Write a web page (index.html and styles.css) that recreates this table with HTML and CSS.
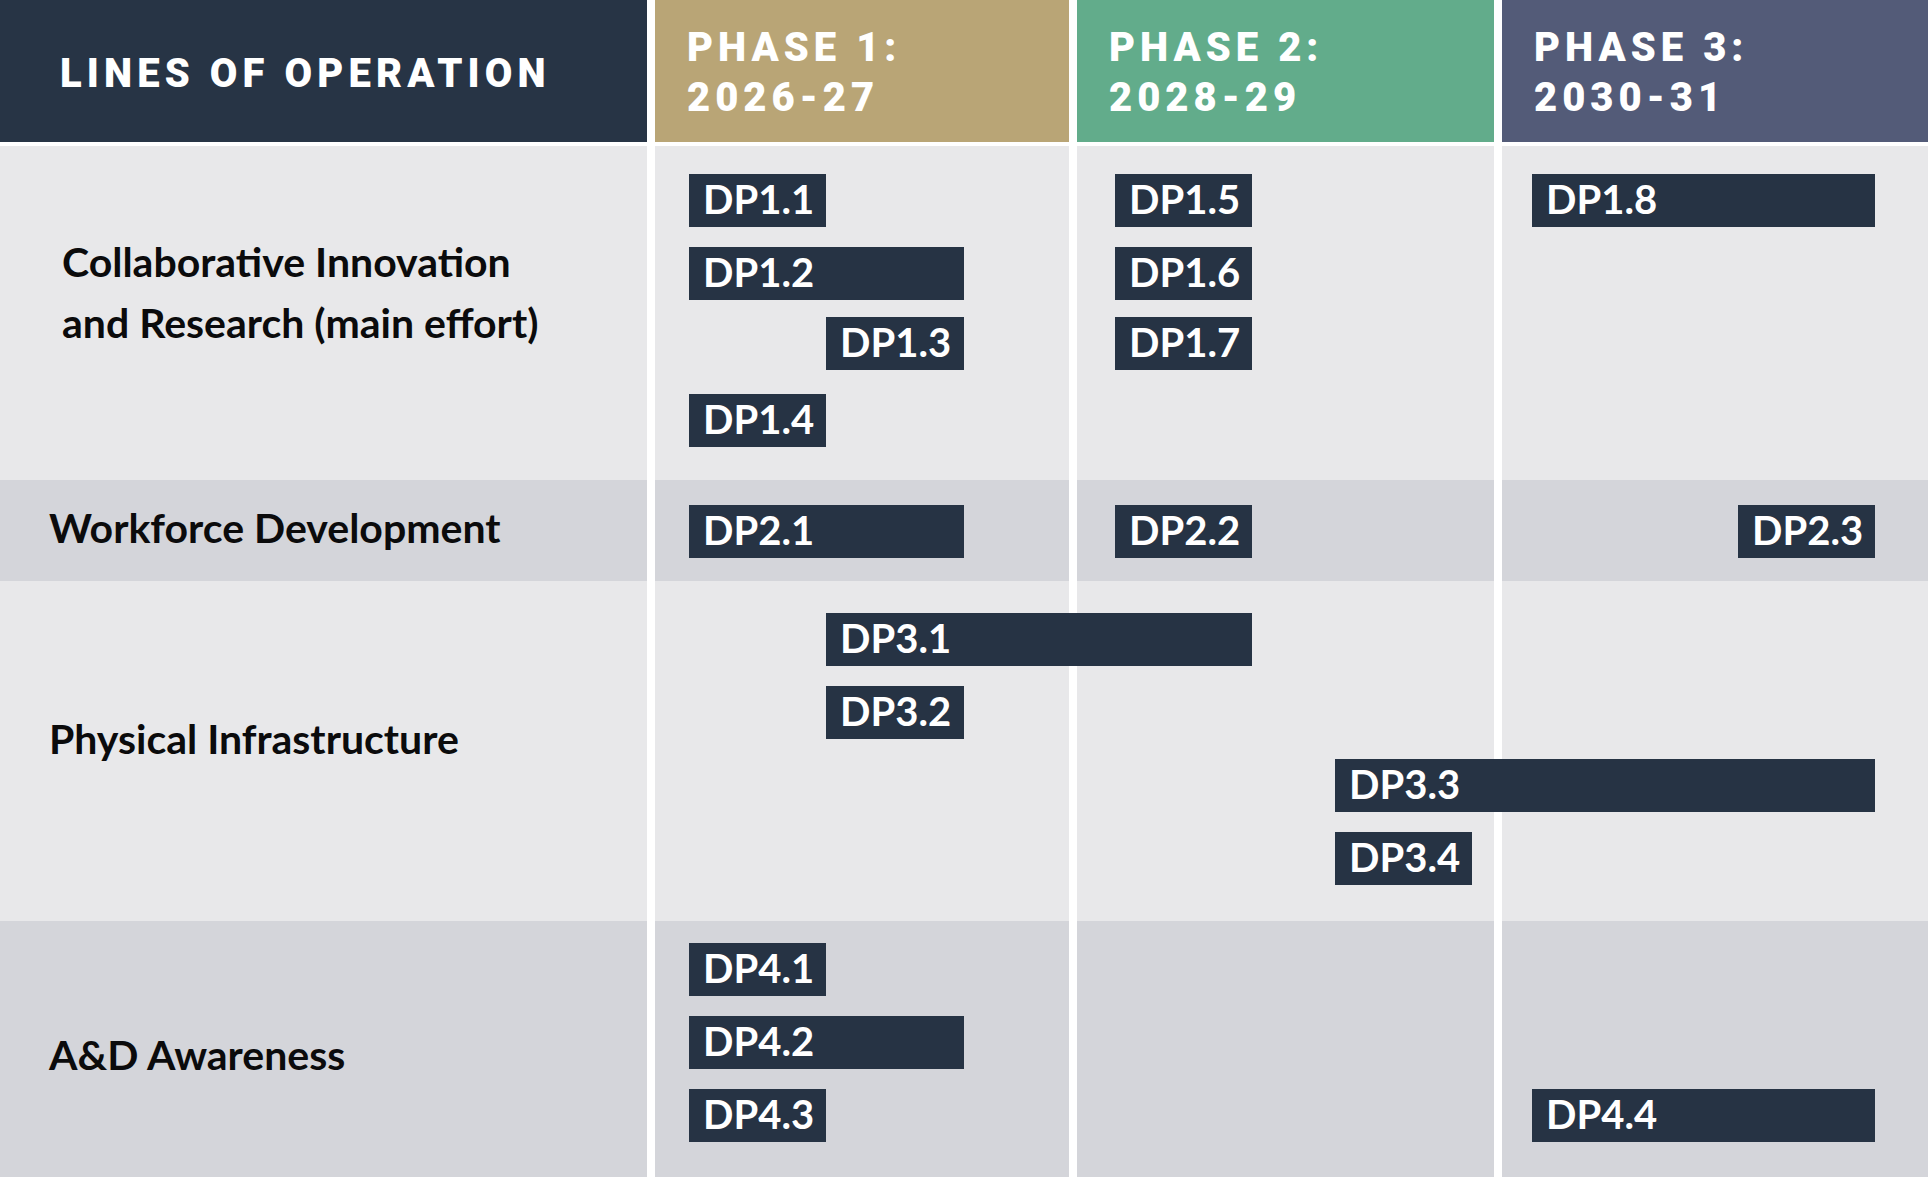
FILE: index.html
```html
<!DOCTYPE html>
<html lang="en">
<head>
<meta charset="utf-8">
<title>Lines of Operation Roadmap</title>
<link rel="stylesheet" href="styles.css">
</head>
<body>
<div class="chart">
  <div class="hd hd-lines">LINES OF OPERATION</div>
  <div class="hd hd-phase hd-p1">PHASE 1:<br>2026-27</div>
  <div class="hd hd-phase hd-p2">PHASE 2:<br>2028-29</div>
  <div class="hd hd-phase hd-p3">PHASE 3:<br>2030-31</div>

  <div class="label r1 light label-r1">Collaborative Innovation<br>and Research (main effort)</div>
  <div class="cell r1 c2 light"></div>
  <div class="cell r1 c3 light"></div>
  <div class="cell r1 c4 light"></div>
  <div class="track r1 track-r1">
    <div class="lane">
      <div class="bar" style="grid-column: 2 / 3">DP1.1</div>
      <div class="bar" style="grid-column: 5 / 6">DP1.5</div>
      <div class="bar" style="grid-column: 9 / 11">DP1.8</div>
    </div>
    <div class="lane">
      <div class="bar" style="grid-column: 2 / 4">DP1.2</div>
      <div class="bar" style="grid-column: 5 / 6">DP1.6</div>
    </div>
    <div class="lane lane-tight">
      <div class="bar" style="grid-column: 3 / 4">DP1.3</div>
      <div class="bar" style="grid-column: 5 / 6">DP1.7</div>
    </div>
    <div class="lane lane-loose">
      <div class="bar" style="grid-column: 2 / 3">DP1.4</div>
    </div>
  </div>

  <div class="label r2 dark label-r2">Workforce Development</div>
  <div class="cell r2 c2 dark"></div>
  <div class="cell r2 c3 dark"></div>
  <div class="cell r2 c4 dark"></div>
  <div class="track r2 track-r2">
    <div class="lane">
      <div class="bar" style="grid-column: 2 / 4">DP2.1</div>
      <div class="bar" style="grid-column: 5 / 6">DP2.2</div>
      <div class="bar" style="grid-column: 10 / 11">DP2.3</div>
    </div>
  </div>

  <div class="label r3 light label-r3">Physical Infrastructure</div>
  <div class="cell r3 c2 light"></div>
  <div class="cell r3 c3 light"></div>
  <div class="cell r3 c4 light"></div>
  <div class="track r3 track-r3">
    <div class="lane">
      <div class="bar" style="grid-column: 3 / 6">DP3.1</div>
    </div>
    <div class="lane">
      <div class="bar" style="grid-column: 3 / 4">DP3.2</div>
    </div>
    <div class="lane">
      <div class="bar" style="grid-column: 7 / 11">DP3.3</div>
    </div>
    <div class="lane">
      <div class="bar" style="grid-column: 7 / 8">DP3.4</div>
    </div>
  </div>

  <div class="label r4 dark label-r4">A&amp;D Awareness</div>
  <div class="cell r4 c2 dark"></div>
  <div class="cell r4 c3 dark"></div>
  <div class="cell r4 c4 dark"></div>
  <div class="track r4 track-r4">
    <div class="lane">
      <div class="bar" style="grid-column: 2 / 3">DP4.1</div>
    </div>
    <div class="lane">
      <div class="bar" style="grid-column: 2 / 4">DP4.2</div>
    </div>
    <div class="lane">
      <div class="bar" style="grid-column: 2 / 3">DP4.3</div>
      <div class="bar" style="grid-column: 9 / 11">DP4.4</div>
    </div>
  </div>
</div>
</body>
</html>
```

FILE: styles.css
```css
html, body {
  margin: 0;
  padding: 0;
  background: #ffffff;
  overflow: hidden;
}

.chart {
  display: grid;
  grid-template-columns: 647px 414px 417px 1fr;
  grid-template-rows: 146px 334px 101px 340px 256px;
  column-gap: 8px;
  width: 1928px;
  height: 1177px;
  background: #ffffff;
}

/* header */
.hd {
  grid-row: 1;
  height: 142px;
  box-sizing: border-box;
  display: flex;
  align-items: center;
  color: #ffffff;
  font-family: "Roboto", "Liberation Sans", sans-serif;
  font-weight: 900;
}

.hd-lines {
  grid-column: 1;
  background: #273445;
  padding-left: 60px;
  padding-top: 4px;
  font-size: 40px;
  letter-spacing: 5.1px;
}

.hd-phase {
  font-size: 40px;
  line-height: 50px;
  letter-spacing: 5px;
  padding-left: 32px;
  padding-top: 3px;
}

.hd-p1 { grid-column: 2; background: #b9a576; }
.hd-p2 { grid-column: 3; background: #62ac8b; }
.hd-p3 { grid-column: 4; background: #535b78; }

/* rows */
.r1 { grid-row: 2; }
.r2 { grid-row: 3; }
.r3 { grid-row: 4; }
.r4 { grid-row: 5; }

.c2 { grid-column: 2; }
.c3 { grid-column: 3; }
.c4 { grid-column: 4; }

.light { background: #e8e8ea; }
.dark { background: #d4d5da; }

.label {
  grid-column: 1;
  font-family: "Lato", "Noto Sans", sans-serif;
  font-weight: 700;
  font-size: 41px;
  line-height: 61px;
  color: #0b0b0c;
  padding-left: 49px;
}

.label-r1 { padding-left: 62px; padding-top: 85px; }
.label-r2 { padding-top: 17px; }
.label-r3 { padding-top: 127px; }
.label-r4 { padding-top: 103px; }

/* timeline tracks */
.track {
  grid-column: 2 / 5;
  display: flex;
  flex-direction: column;
  gap: 20px;
}

.track-r1 { padding-top: 28px; }
.track-r2 { padding-top: 25px; }
.track-r3 { padding-top: 32px; }
.track-r4 { padding-top: 22px; }

.lane {
  display: grid;
  grid-template-columns: 34px 137px 138px 151px 137px 83px 137px 60px 206px 137px 1fr;
  height: 53px;
}

.lane-tight { margin-top: -3px; }
.lane-loose { margin-top: 4px; }

.bar {
  grid-row: 1;
  background: #263344;
  color: #ffffff;
  font-family: "Lato", "Noto Sans", sans-serif;
  font-weight: 700;
  font-size: 40px;
  line-height: 50px;
  height: 53px;
  padding-left: 14px;
  white-space: nowrap;
}
```
